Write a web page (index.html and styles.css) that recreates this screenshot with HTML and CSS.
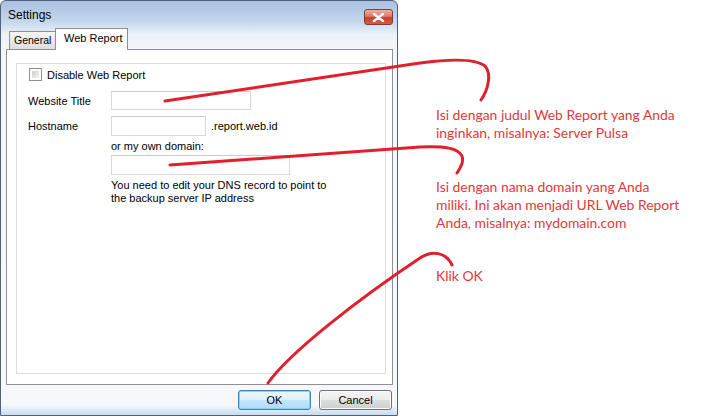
FILE: index.html
```html
<!DOCTYPE html>
<html>
<head>
<meta charset="utf-8">
<link rel="stylesheet" href="styles.css">
</head>
<body>
<div class="page">
  <div class="window">
    <div class="titlebar">
      <span class="title">Settings</span>
      <span class="close">
        <svg width="13" height="9" viewBox="0 0 13 9"><path d="M2 1 L11 8 M11 1 L2 8" stroke="#fff" stroke-width="2.4" stroke-linecap="round"/></svg>
      </span>
    </div>
    <div class="tabs">
      <div class="tab">General</div>
      <div class="tab active">Web Report</div>
    </div>
    <div class="panel">
      <div class="group">
        <label class="check-row"><span class="checkbox"></span><span>Disable Web Report</span></label>
        <div class="form">
          <span class="label">Website Title</span>
          <span class="field"><span class="input w-title"></span></span>
          <span class="label">Hostname</span>
          <span class="field"><span class="input w-host"></span><span class="suffix">.report.web.id</span></span>
          <span></span>
          <span class="note-line">or my own domain:</span>
          <span></span>
          <span class="field"><span class="input w-domain"></span></span>
          <span></span>
          <span class="hint">You need to edit your DNS record to point to<br>the backup server IP address</span>
        </div>
      </div>
    </div>
    <div class="buttons">
      <span class="btn default">OK</span>
      <span class="btn">Cancel</span>
    </div>
  </div>
  <div class="notes">
    <p class="note n1">Isi dengan judul Web Report yang Anda<br>inginkan, misalnya: Server Pulsa</p>
    <p class="note n2">Isi dengan nama domain yang Anda<br>miliki. Ini akan menjadi URL Web Report<br>Anda, misalnya: mydomain.com</p>
    <p class="note n3">Klik OK</p>
  </div>
  <svg class="arrows" width="723" height="419" viewBox="0 0 723 419">
    <g fill="none" stroke="#e0202c" stroke-width="3" stroke-linecap="round">
      <path d="M165 101 L420 63 C450 59 475 58 485 66 C492 74 488 90 481 100"/>
      <path d="M170 165 L420 147 C445 146 458 148 462 156 C464 163 460 168 457 173"/>
      <path d="M268 383 C290 352 360 298 420 258 C432 250 446 252 452 265"/>
    </g>
  </svg>
</div>
</body>
</html>
```

FILE: styles.css
```css
* { box-sizing: border-box; }
html, body { margin: 0; padding: 0; background: #fff; }
body { width: 723px; height: 419px; overflow: hidden; font-family: "Liberation Sans", Arial, sans-serif; font-size: 11px; color: #000; }

.page { position: relative; display: flex; align-items: flex-start; width: 723px; height: 419px; }

.window {
  width: 398px;
  height: 416px;
  flex: none;
  display: flex;
  flex-direction: column;
  border: 1px solid #50627a;
  border-radius: 6px 6px 0 0;
  padding: 0 4px 0 5px;
  background: linear-gradient(to bottom, #a9c2df 0, #c3d6ec 20px, #dbe7f4 28px, #eef3f9 34px, #f5f7fa 60px, #f6f8fb 404px, #d7e7f5 410px, #c6dcf0 414px);
}

.titlebar {
  height: 27px;
  display: flex;
  align-items: center;
  justify-content: space-between;
  padding-left: 2px;
}
.title { font-size: 12px; color: #000; margin-top: 1px; }
.close {
  width: 29px;
  height: 16px;
  margin-top: 5px;
  border: 1px solid #8a3a2e;
  border-radius: 3px;
  display: flex;
  align-items: center;
  justify-content: center;
  background: linear-gradient(to bottom, #eab1a6 0, #dc7a69 45%, #c7402a 55%, #d0604c 100%);
}

.tabs {
  display: flex;
  align-items: flex-end;
  padding: 1px 0 0 3px;
  height: 22px;
  margin-bottom: -1px;
  position: relative;
  z-index: 1;
}
.tab {
  height: 18px;
  padding: 2px 0 0 4px;
  border: 1px solid #8d9097;
  border-bottom: none;
  background: linear-gradient(to bottom, #f5f5f5, #dedede);
  font-size: 10.5px;
  width: 47px;
  margin-bottom: 1px;
  white-space: nowrap;
}
.tab.active {
  height: 22px;
  width: 73px;
  margin-bottom: 0;
  margin-left: -1px;
  padding: 3px 0 0 8px;
  background: #fff;
  font-size: 11px;
}

.panel {
  height: 336px;
  width: 387px;
  border: 1px solid #8d9097;
  background: #fff;
  padding: 13px 6px 0 9px;
}

.group {
  width: 370px;
  height: 311px;
  border: 1px solid #dcdcdc;
  padding: 4px 0 0 11px;
}

.check-row { display: flex; align-items: center; height: 13px; gap: 5px; }
.checkbox {
  width: 13px;
  height: 13px;
  margin-left: 1px;
  border: 1px solid #8e8f8f;
  background: #fff;
  padding: 2px;
  display: block;
}
.checkbox::after {
  content: "";
  display: block;
  width: 100%;
  height: 100%;
  background: linear-gradient(135deg, #cfcfcf, #f4f4f4);
}

.form {
  display: grid;
  grid-template-columns: 83px auto;
  margin-top: 10px;
  align-items: center;
}
.label { grid-column: 1; }
.field { display: flex; align-items: center; }
.input {
  display: block;
  height: 19px;
  border: 1px solid #d6d9de;
  border-top-color: #c9ccd2;
  background: #fff;
}
.w-title { width: 140px; }
.w-host { width: 95px; height: 20px; }
.w-domain { width: 179px; height: 20px; }
.suffix { margin-left: 5px; }
.form > :nth-child(3), .form > :nth-child(4) { margin-top: 6px; }
.note-line { margin-top: 4px; line-height: 13px; }
.form > :nth-child(8), .form > :nth-child(7) { margin-top: 2px; }
.hint { margin-top: 4px; line-height: 13px; }

.buttons {
  display: flex;
  justify-content: flex-end;
  gap: 8px;
  margin-top: 5px;
  padding-right: 1px;
}
.btn {
  width: 73px;
  height: 20px;
  border: 1px solid #707070;
  border-radius: 3px;
  display: flex;
  align-items: center;
  justify-content: center;
  font-size: 11px;
  background: linear-gradient(to bottom, #f4f4f4 0, #ebebeb 50%, #dddddd 51%, #cfcfcf 100%);
  box-shadow: inset 0 0 0 1px #fbfbfb;
}
.btn.default {
  border-color: #3c7fb1;
  background: linear-gradient(to bottom, #eef7fd 0, #dcf0fc 50%, #c3e5fa 51%, #b2d9f3 100%);
  box-shadow: inset 0 0 0 1px #8fd0f3;
}

.notes {
  padding-left: 38px;
  font-family: Lato, "Open Sans", sans-serif;
  font-size: 13.9px;
  line-height: 18px;
  color: #e2383c;
}
.note { margin: 0; white-space: nowrap; }
.n1 { margin-top: 106px; }
.n2 { margin-top: 36px; }
.n3 { margin-top: 35px; }

.arrows { position: absolute; left: 0; top: 0; pointer-events: none; }
```
